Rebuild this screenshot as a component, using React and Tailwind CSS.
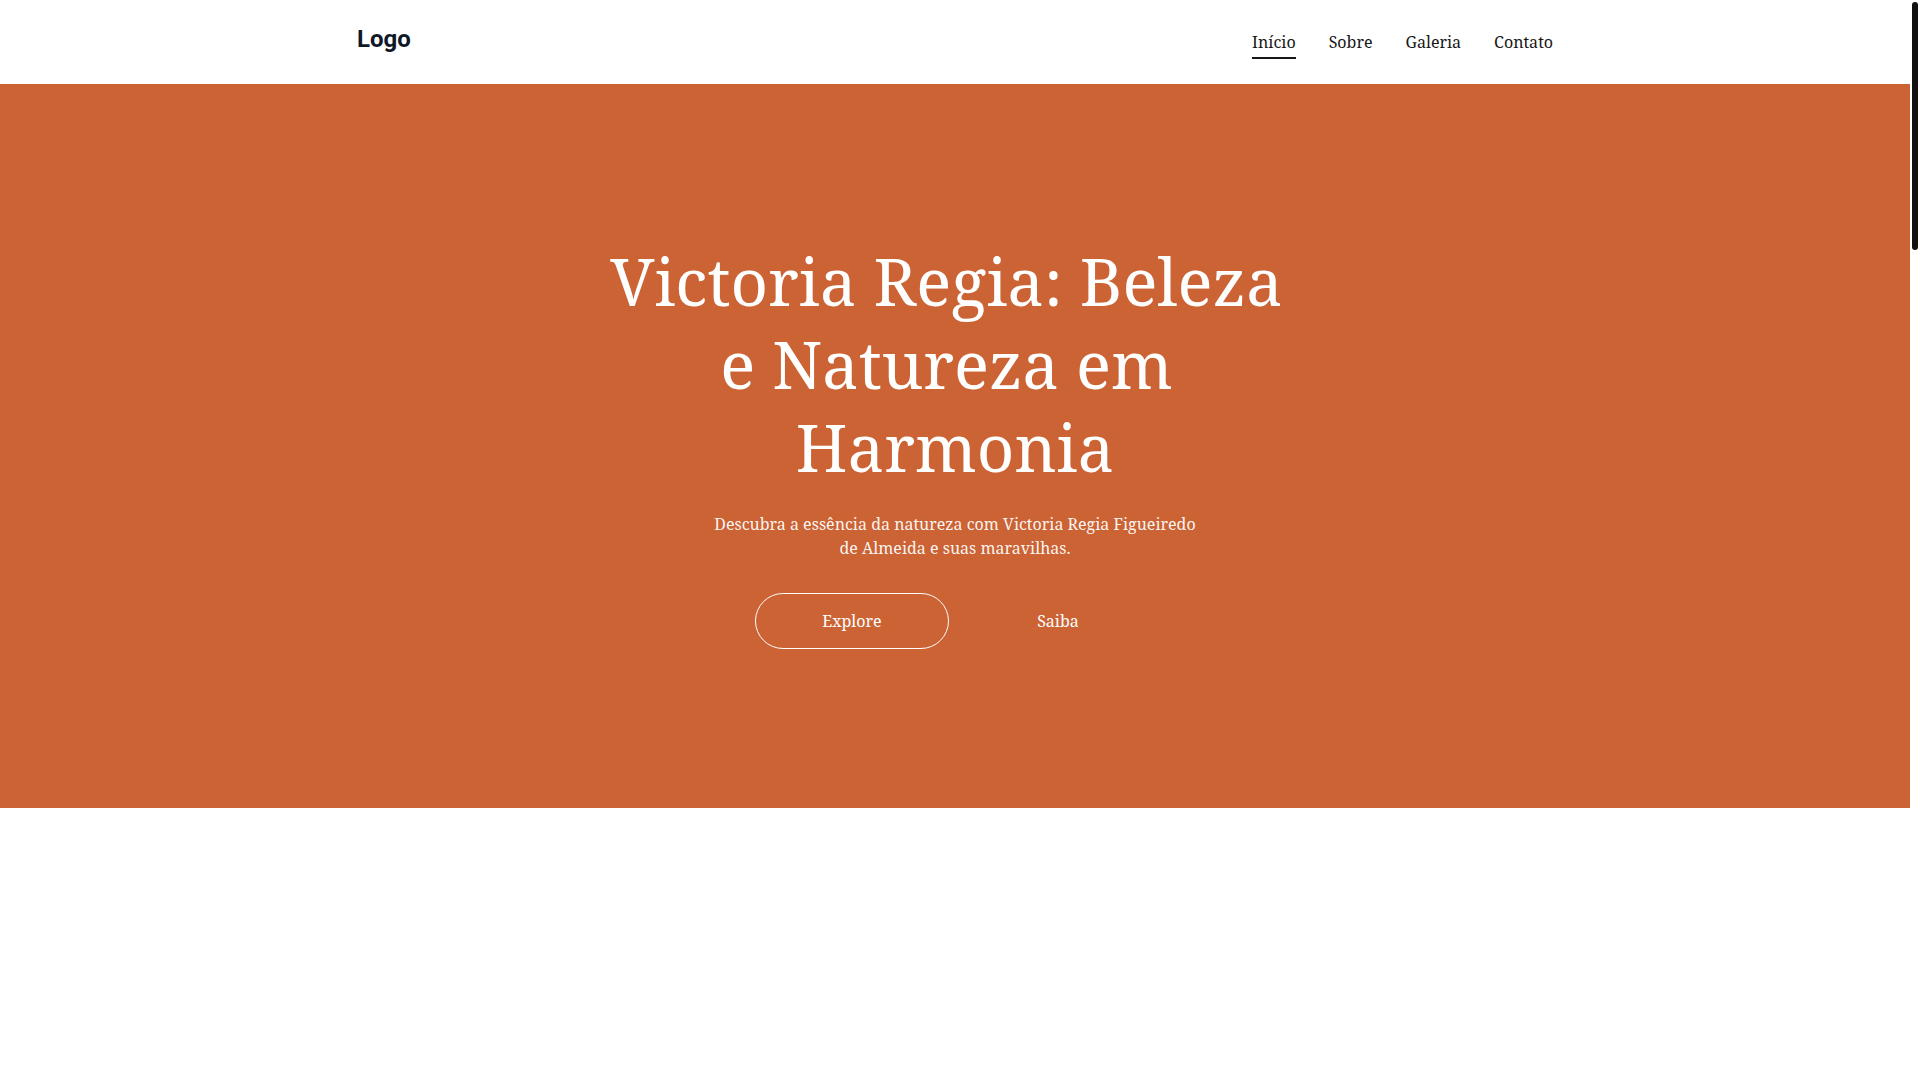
import React from 'react';

const NAV = ['Início', 'Sobre', 'Galeria', 'Contato'];

const serif = { fontFamily: '"Noto Serif", "DejaVu Serif", serif' };

const App = () => {
  return (
    <div className="flex min-h-screen bg-white">
      <main className="flex-1">
        <header className="h-[84px] bg-white">
          <div className="mx-auto flex h-full max-w-[1196px] items-center justify-between">
            <a href="#" className="-mt-[6px] font-['Roboto',sans-serif] text-2xl font-bold text-gray-900">
              Logo
            </a>
            <nav className="flex items-center gap-[33px] text-base text-neutral-900" style={serif}>
              {NAV.map((item, i) => (
                <a
                  key={item}
                  href="#"
                  className={i === 0 ? 'border-b-2 border-neutral-900 pb-[3px] pt-[5px]' : 'pb-[5px] pt-[5px]'}
                >
                  {item}
                </a>
              ))}
            </nav>
          </div>
        </header>

        <section className="flex h-[724px] items-center justify-center bg-[#cc6334] pb-[5px] text-white" style={serif}>
          <div className="flex flex-col items-center text-center">
            <h1 className="max-w-[700px] whitespace-break-spaces text-[65.3px] leading-[83px]">
              Victoria Regia: Beleza e Natureza em Harmonia
            </h1>
            <p className="mt-6 max-w-[500px] text-base leading-6 text-white/95">
              Descubra a essência da natureza com Victoria Regia Figueiredo de Almeida e suas maravilhas.
            </p>
            <div className="mt-[33px] flex gap-3">
              <button className="h-[56px] w-[194px] rounded-full border border-white text-base">Explore</button>
              <button className="h-[56px] w-[194px] rounded-full border border-transparent text-base">Saiba</button>
            </div>
          </div>
        </section>

        <div className="h-[272px] bg-white" />
      </main>

      {/* scrollbar rail */}
      <aside className="w-[10px] shrink-0 bg-white pl-[2px] pt-[2px]">
        <div className="h-[248px] w-[6px] rounded-full bg-[#111111]" />
      </aside>
    </div>
  );
};

export default App;
